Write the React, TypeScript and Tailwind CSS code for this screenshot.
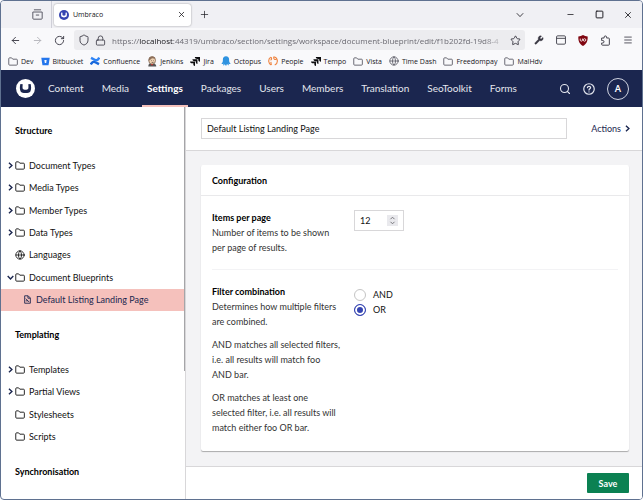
import React, { useState } from "react";
import {
  ArrowLeft,
  ArrowRight,
  Globe,
  Lock,
  Menu,
  Minus,
  Plus,
  RotateCw,
  Search,
  Shield,
  Square,
  Star,
  Wrench,
  X,
} from "lucide-react";

function UmbracoMark({ className, disc, mark }: { className: string; disc: string; mark: string }) {
  return (
    <svg viewBox="0 0 20 20" className={className} aria-hidden="true">
      <circle cx="10" cy="10" r="10" fill={disc} />
      <path
        d="M4.6 5.2 L7.1 5.5 C6.8 7.6 6.7 9.6 7.3 10.6 C8 11.7 12 11.7 12.7 10.6 C13.3 9.6 13.2 7.6 12.9 5.5 L15.4 5.2 C16.1 8 16.2 11 15.1 13.1 C13.8 15.3 6.2 15.3 4.9 13.1 C3.8 11 3.9 8 4.6 5.2 Z"
        fill={mark}
      />
    </svg>
  );
}

function FolderIcon({ className }: { className: string }) {
  return (
    <svg viewBox="0 0 20 18" className={className} fill="none" stroke="currentColor" strokeWidth="1.8" strokeLinejoin="round" aria-hidden="true">
      <path d="M1.5 14.5V3.5A1.8 1.8 0 0 1 3.3 1.7H7.2L9.6 4.4H16.9A1.8 1.8 0 0 1 18.7 6.2V14.5A1.8 1.8 0 0 1 16.9 16.3H3.3A1.8 1.8 0 0 1 1.5 14.5Z" />
    </svg>
  );
}

function Chevron({ className, weight = 2 }: { className: string; weight?: number }) {
  return (
    <svg viewBox="0 0 10 10" className={className} fill="none" stroke="currentColor" strokeWidth={weight} aria-hidden="true">
      <path d="M2.8 1 L7 5 L2.8 9" />
    </svg>
  );
}

function BlueprintIcon() {
  return (
    <svg viewBox="0 0 16 20" className="h-[9px] w-[7px]" fill="none" stroke="currentColor" strokeWidth="2" aria-hidden="true">
      <path d="M1.5 1.5H9.5L14.5 6.5V18.5H1.5Z" />
      <path d="M4 8 L12 16 M4 13H9 M9 2V7H14" />
    </svg>
  );
}

function BitbucketLogo() {
  return (
    <svg viewBox="0 0 16 16" className="size-[9px]" aria-hidden="true">
      <path d="M0.5 1.5H15.5L13.4 14.5H2.6Z M6 5.5L6.8 10.5H9.3L10 5.5Z" fill="#2476ec" fillRule="evenodd" />
    </svg>
  );
}

function ConfluenceLogo() {
  return (
    <svg viewBox="0 0 16 16" className="size-[10px]" fill="none" strokeWidth="4" aria-hidden="true">
      <path d="M1.2 13.6C4 8.6 6 8.6 8.5 10L14.4 13" stroke="#1868db" />
      <path d="M14.8 2.4C12 7.4 10 7.4 7.5 6L1.6 3" stroke="#2f84f5" />
    </svg>
  );
}

function JenkinsLogo() {
  return (
    <svg viewBox="0 0 16 18" className="h-[11px] w-[10px]" aria-hidden="true">
      <path d="M2 17C2 13 4 12 8 12S15 14 15 17Z" fill="#555" />
      <ellipse cx="8.2" cy="7.2" rx="5.6" ry="6.2" fill="#edd0b0" stroke="#5a4334" strokeWidth="1" />
      <path d="M2.6 8C2 3 5 0.6 9 1C11.6 1.2 13.2 3 13 4.6L8 3.6L5 6Z" fill="#8d6f5a" />
      <path d="M6 13L10 13L8 16Z" fill="#c83a32" />
      <path d="M7 7.5H8 M10.3 7.5H11.2 M7.5 10.5H10.5" stroke="#4a3428" strokeWidth="1.1" />
    </svg>
  );
}

function JiraLogo() {
  return (
    <svg viewBox="0 0 18 16" className="h-[9px] w-[10px]" fill="#0d0d0f" aria-hidden="true">
      <path d="M8.6 0H18V8.6C15.8 8.4 14.8 7 14.8 5V3.4H13C10.4 3.4 8.8 2.2 8.6 0Z" />
      <path d="M4.3 3.9H13.4V12.4C11.2 12.2 10.4 10.8 10.4 9V7.4H8.6C6 7.4 4.5 6 4.3 3.9Z" />
      <path d="M0 7.8H9V16C6.8 15.8 6 14.6 6 12.8V11.2H4.3C1.7 11.2 0.2 10 0 7.8Z" />
    </svg>
  );
}

function OctopusLogo() {
  return (
    <svg viewBox="0 0 16 16" className="size-[10px]" fill="#2f93e0" aria-hidden="true">
      <path d="M8 0.5C4.8 0.5 2.8 2.9 3 6C3.2 8.6 2.8 10 0.8 12.2C0.8 13.2 2.6 12.8 4 11.8C3.4 13.4 3.4 14.6 4 15.2C5 15 5.5 13.8 6.2 12.6C6.8 14.2 7 15.4 8.2 15.4C9.2 15 9 13.6 9.6 12.4C10.4 13.8 11.2 15 12.2 14.8C12.8 14 12.2 12.8 12.2 11.8C13.4 12.8 15 13 15.4 12.2C13.2 10.2 12.8 8.6 13 6C13.2 2.9 11.2 0.5 8 0.5Z" />
    </svg>
  );
}

function PeopleLogo() {
  return (
    <svg viewBox="0 0 16 16" className="size-[10px]" fill="none" stroke="#ef8440" strokeWidth="1.8" aria-hidden="true">
      <path d="M5.2 14.4A7 7 0 0 1 4.4 2.1 M10.8 14.4A7 7 0 0 0 9 1.1" />
      <path d="M4.2 2.2C6.8 3.2 6 6 4 6.6 M9.2 1.4C8.6 4.6 10.4 6.2 13.4 5.4 M5.2 14.4L4.6 9.4" />
    </svg>
  );
}

function UBlockLogo() {
  return (
    <svg viewBox="0 0 18 20" className="h-[11px] w-[10px]" aria-hidden="true">
      <path d="M9 0C11.5 1.8 14 2.4 17.5 2.5C17.8 11 15.6 16 9 20C2.4 16 0.2 11 0.5 2.5C4 2.4 6.5 1.8 9 0Z" fill="#800610" />
      <path d="M4 6.5V9.5C4 11.8 8 11.8 8 9.5V6.5" fill="none" stroke="#fff" strokeWidth="1.5" />
      <circle cx="11.8" cy="9" r="2.3" fill="none" stroke="#fff" strokeWidth="1.5" />
    </svg>
  );
}

function ExtensionsIcon() {
  return (
    <svg viewBox="0 0 20 20" className="size-[11px]" fill="none" stroke="currentColor" strokeWidth="1.7" strokeLinejoin="round" aria-hidden="true">
      <path d="M3 5.5H7.5V4A2.2 2.2 0 0 1 12 4V5.5H15.5Q17 5.5 17 7V17Q17 18.5 15.5 18.5H4.5Q3 18.5 3 17V14.5H5A2.2 2.2 0 0 0 5 10H3Z" />
    </svg>
  );
}

const bookmarks = [
  { label: "Dev", icon: <FolderIcon className="h-[9px] w-[10px] text-[#5b5b66]" /> },
  { label: "Bitbucket", icon: <BitbucketLogo /> },
  { label: "Confluence", icon: <ConfluenceLogo /> },
  { label: "Jenkins", icon: <JenkinsLogo /> },
  { label: "Jira", icon: <JiraLogo /> },
  { label: "Octopus", icon: <OctopusLogo /> },
  { label: "People", icon: <PeopleLogo /> },
  { label: "Tempo", icon: <JiraLogo /> },
  { label: "Vista", icon: <FolderIcon className="h-[9px] w-[10px] text-[#5b5b66]" /> },
  { label: "Time Dash", icon: <Globe className="size-[10px] text-[#5b5b66]" strokeWidth={2} /> },
  { label: "Freedompay", icon: <FolderIcon className="h-[9px] w-[10px] text-[#5b5b66]" /> },
  { label: "MalHdv", icon: <FolderIcon className="h-[9px] w-[10px] text-[#5b5b66]" /> },
];

const sections = ["Content", "Media", "Settings", "Packages", "Users", "Members", "Translation", "SeoToolkit", "Forms"];

type Item = { label: string; kind?: "globe"; state?: "closed" | "open" };

const structure: Item[] = [
  { label: "Document Types", state: "closed" },
  { label: "Media Types", state: "closed" },
  { label: "Member Types", state: "closed" },
  { label: "Data Types", state: "closed" },
  { label: "Languages", kind: "globe" },
  { label: "Document Blueprints", state: "open" },
];

const templating: Item[] = [
  { label: "Templates", state: "closed" },
  { label: "Partial Views", state: "closed" },
  { label: "Stylesheets" },
  { label: "Scripts" },
];

function TreeItem({ item }: { item: Item }) {
  return (
    <li className="flex items-center pl-1">
      <button type="button" aria-label={`Toggle ${item.label}`} className="flex w-[10px] justify-center text-[#1b264f]">
        {item.state === "closed" && <Chevron className="size-[7px]" />}
        {item.state === "open" && <Chevron className="size-[7px] rotate-90" />}
      </button>
      <a href="#" className="flex items-center gap-1 text-[#111]">
        {item.kind === "globe" ? (
          <Globe className="size-[10px]" strokeWidth={2} />
        ) : (
          <FolderIcon className="h-[9px] w-[10px]" />
        )}
        {item.label}
      </a>
    </li>
  );
}

function BrowserChrome() {
  return (
    <div className="shrink-0 font-['Open_Sans',sans-serif] text-[7px] text-[#15141a]">
      <div className="flex h-[27px] items-center bg-[#f0f0f4]">
        <button type="button" aria-label="Recent browsing" className="flex h-full w-[51px] items-center justify-end border-r border-[#cfcfd8] pr-2">
          <svg viewBox="0 0 20 20" className="size-[11px]" fill="none" stroke="#5b5b66" strokeWidth="1.8" strokeLinejoin="round" aria-hidden="true">
            <path d="M3.5 1.5H16.5 M1.5 5.5H18.5V17Q18.5 18.5 17 18.5H3Q1.5 18.5 1.5 17Z M7 11H13" />
          </svg>
        </button>
        <div className="ml-[2px] flex h-[22px] w-[137px] items-center rounded-[3px] bg-white px-[5px] shadow-[0_0_2px_rgba(0,0,0,0.4)]">
          <UmbracoMark className="size-[10px]" disc="#3544b1" mark="#fff" />
          <span className="ml-[4px] grow">Umbraco</span>
          <button type="button" aria-label="Close tab">
            <X className="size-[9px]" strokeWidth={2} />
          </button>
        </div>
        <button type="button" aria-label="New tab" className="ml-2">
          <Plus className="size-[11px]" strokeWidth={1.5} />
        </button>
        <div className="ml-auto flex items-center pr-[9px]">
          <button type="button" aria-label="List all tabs" className="mr-[42px]">
            <Chevron className="size-[8px] rotate-90" weight={1} />
          </button>
          <button type="button" aria-label="Minimise" className="mr-[20px]">
            <Minus className="size-[9px]" strokeWidth={2} />
          </button>
          <button type="button" aria-label="Maximise" className="mr-[19px]">
            <Square className="size-[9px]" strokeWidth={2.5} />
          </button>
          <button type="button" aria-label="Close window">
            <X className="size-[10px]" strokeWidth={2} />
          </button>
        </div>
      </div>

      <div className="flex h-[24px] items-center bg-[#f9f9fb] px-[9px] text-[#3a3944]">
        <button type="button" aria-label="Back">
          <ArrowLeft className="size-[11px]" strokeWidth={2} />
        </button>
        <button type="button" aria-label="Forward" className="ml-[11px] text-[#b4b4ba]">
          <ArrowRight className="size-[11px]" strokeWidth={2} />
        </button>
        <button type="button" aria-label="Reload" className="ml-[11px]">
          <RotateCw className="size-[11px]" strokeWidth={2} />
        </button>
        <div className="ml-[9px] flex h-[20px] min-w-0 grow items-center rounded-[3px] bg-[#ececef] px-[4px]">
          <Shield className="size-[12px] shrink-0" strokeWidth={1.8} />
          <Lock className="ml-[5px] size-[11px] shrink-0" strokeWidth={1.8} />
          <div
            role="textbox"
            aria-label="Address"
            className="ml-[6px] min-w-0 grow [mask-image:linear-gradient(to_right,black_94%,transparent)] text-[8px] whitespace-nowrap text-[#6b6a72]"
          >
            https://<span className="text-[#15141a]">localhost</span>
            :44319/umbraco/section/settings/workspace/document-blueprint/edit/f1b202fd-19d8-4
          </div>
          <button type="button" aria-label="Bookmark this page" className="ml-[3px]">
            <Star className="size-[11px]" strokeWidth={2} />
          </button>
        </div>
        <div className="ml-[9px] flex items-center gap-[12px]">
          <button type="button" aria-label="Developer tools">
            <Wrench className="size-[10px]" fill="currentColor" strokeWidth={1} />
          </button>
          <button type="button" aria-label="Containers">
            <svg viewBox="0 0 18 18" className="size-[10px]" fill="none" stroke="currentColor" strokeWidth="1.6" aria-hidden="true">
              <rect x="1" y="1.5" width="16" height="15" rx="2" />
              <path d="M1 6H17" />
            </svg>
          </button>
          <button type="button" aria-label="uBlock Origin">
            <UBlockLogo />
          </button>
          <button type="button" aria-label="Extensions">
            <ExtensionsIcon />
          </button>
          <button type="button" aria-label="Menu">
            <Menu className="size-[10px]" strokeWidth={2} />
          </button>
        </div>
      </div>

      <div className="flex h-[18px] items-center gap-[7px] bg-[#f9f9fb] pl-[7px] whitespace-nowrap">
        {bookmarks.map((b) => (
          <a key={b.label} href="#" className="flex items-center gap-[3px]">
            {b.icon}
            {b.label}
          </a>
        ))}
      </div>
    </div>
  );
}

export default function App() {
  const [combine, setCombine] = useState("or");

  return (
    <div className="flex h-screen flex-col overflow-hidden rounded-[4px] border border-[#5f7190] bg-white font-['Lato',sans-serif] text-[9px] leading-[15px] text-[#111]">
      <BrowserChrome />

      <header className="flex h-[37px] shrink-0 items-center bg-[#1b264f] pr-[13px] pl-[15px] text-[#e4e6ee]">
        <a href="#" aria-label="Home">
          <UmbracoMark className="size-[19px]" disc="#fff" mark="#1b264f" />
        </a>
        <nav className="ml-[4px] flex h-full items-stretch text-[10px]">
          {sections.map((s) =>
            s === "Settings" ? (
              <a key={s} href="#" aria-current="page" className="mx-[4px] flex items-center border-b-2 border-[#f5c1bc] px-[5px] pt-[2px] font-bold text-white">
                {s}
              </a>
            ) : (
              <a key={s} href="#" className="flex items-center px-[9px]">
                {s}
              </a>
            ),
          )}
        </nav>
        <div className="ml-auto flex items-center gap-[12px]">
          <button type="button" aria-label="Search">
            <Search className="size-[12px]" strokeWidth={2.2} />
          </button>
          <button type="button" aria-label="Help">
            <svg viewBox="0 0 24 24" className="size-[12px]" fill="none" stroke="currentColor" strokeWidth="2.4" strokeLinecap="round" aria-hidden="true">
              <circle cx="12" cy="12" r="10.5" />
              <path d="M8.8 9.2C9 5.6 15.4 5.8 15.2 9.4C15 11.6 12 11.8 12 14.2 M12 17.6V17.8" />
            </svg>
          </button>
          <button type="button" aria-label="Account" className="flex size-[22px] items-center justify-center rounded-full border border-[#cfd3e0] font-bold text-white">
            A
          </button>
        </div>
      </header>

      <div className="flex min-h-0 grow">
        <aside className="relative w-[185px] shrink-0 overflow-hidden border-r border-[#d8d7d9]">
          <h2 className="px-[14px] py-[16px] font-bold text-black">Structure</h2>
          <ul className="grid h-[157px] auto-rows-fr">
            {structure.map((i) => (
              <TreeItem key={i.label} item={i} />
            ))}
            <li className="flex items-center bg-[#f5c1bc] pl-[23px] text-[#1b264f]">
              <a href="#" className="flex items-center gap-[5px]">
                <BlueprintIcon />
                Default Listing Landing Page
              </a>
            </li>
          </ul>
          <h2 className="px-[14px] py-[16px] font-bold text-black">Templating</h2>
          <ul className="grid h-[90px] auto-rows-fr">
            {templating.map((i) => (
              <TreeItem key={i.label} item={i} />
            ))}
          </ul>
          <h2 className="px-[14px] py-[16px] font-bold text-black">Synchronisation</h2>
          <div className="absolute top-0 right-0 h-[264px] w-px bg-[#a5a5a8]" />
        </aside>

        <main className="flex min-w-0 grow flex-col bg-[#f3f3f5]">
          <div className="flex h-[44px] shrink-0 items-center border-b border-[#d8d7d9] bg-white pr-[11px] pl-[15px]">
            <input
              aria-label="Name"
              defaultValue="Default Listing Landing Page"
              className="h-[21px] min-w-0 grow border border-[#d8d7d9] bg-white px-[5px] outline-none"
            />
            <button type="button" className="ml-[24px] flex items-center gap-[3px] text-[#1b264f]">
              Actions
              <Chevron className="size-[7px]" />
            </button>
          </div>

          <div className="min-h-0 grow pt-[14px] pr-[13px] pl-[15px]">
            <section className="rounded-[2px] bg-white shadow-[0_1px_1px_rgba(0,0,0,0.3)]">
              <h1 className="border-b border-[#e9e9eb] px-[11px] pt-[8px] pb-[7px] font-bold text-black">Configuration</h1>
              <div className="px-[11px]">
                <div className="flex gap-[13px] border-b border-[#f3f3f5] py-[14px]">
                  <div className="w-[129px] shrink-0 text-[#333]">
                    <label htmlFor="page-size" className="block font-bold text-black">
                      Items per page
                    </label>
                    <p>Number of items to be shown per page of results.</p>
                  </div>
                  <div className="relative h-[21px] w-[50px]">
                    <input
                      id="page-size"
                      type="number"
                      defaultValue={12}
                      className="h-[21px] w-[50px] [appearance:textfield] border border-[#d8d7d9] px-[5px] outline-none"
                    />
                    <svg viewBox="0 0 11 11" className="pointer-events-none absolute top-[5px] right-[6px] size-[11px] bg-[#e9e9ed]" fill="none" stroke="#77777c" aria-hidden="true">
                      <path d="M3.5 4.2L5.5 2.2L7.5 4.2 M3.5 6.8L5.5 8.8L7.5 6.8" />
                    </svg>
                  </div>
                </div>

                <div className="flex gap-[13px] pt-[14px] pb-[16px]">
                  <div className="w-[129px] shrink-0 text-[#333]">
                    <h2 id="combine" className="font-bold text-black">
                      Filter combination
                    </h2>
                    <p>Determines how multiple filters are combined.</p>
                    <p className="mt-2">AND matches all selected filters, i.e. all results will match foo AND bar.</p>
                    <p className="mt-2">OR matches at least one selected filter, i.e. all results will match either foo OR bar.</p>
                  </div>
                  <div role="radiogroup" aria-labelledby="combine" className="pt-[3px]">
                    {["and", "or"].map((v) => (
                      <label key={v} className="flex items-center gap-[7px] uppercase">
                        <input
                          type="radio"
                          name="combine"
                          value={v}
                          checked={combine === v}
                          onChange={() => setCombine(v)}
                          className="size-[12px] appearance-none rounded-full border border-[#c4c4c4] bg-white checked:border-[#3544b1] checked:bg-[#3544b1] checked:shadow-[inset_0_0_0_2px_#fff]"
                        />
                        {v}
                      </label>
                    ))}
                  </div>
                </div>
              </div>
            </section>
          </div>

          <footer className="flex h-[33px] shrink-0 items-center justify-end border-t border-[#d8d7d9] bg-white px-[13px]">
            <button type="button" className="h-[20px] w-[42px] rounded-[1px] bg-[#0b8152] font-bold text-white">
              Save
            </button>
          </footer>
        </main>
      </div>
    </div>
  );
}
